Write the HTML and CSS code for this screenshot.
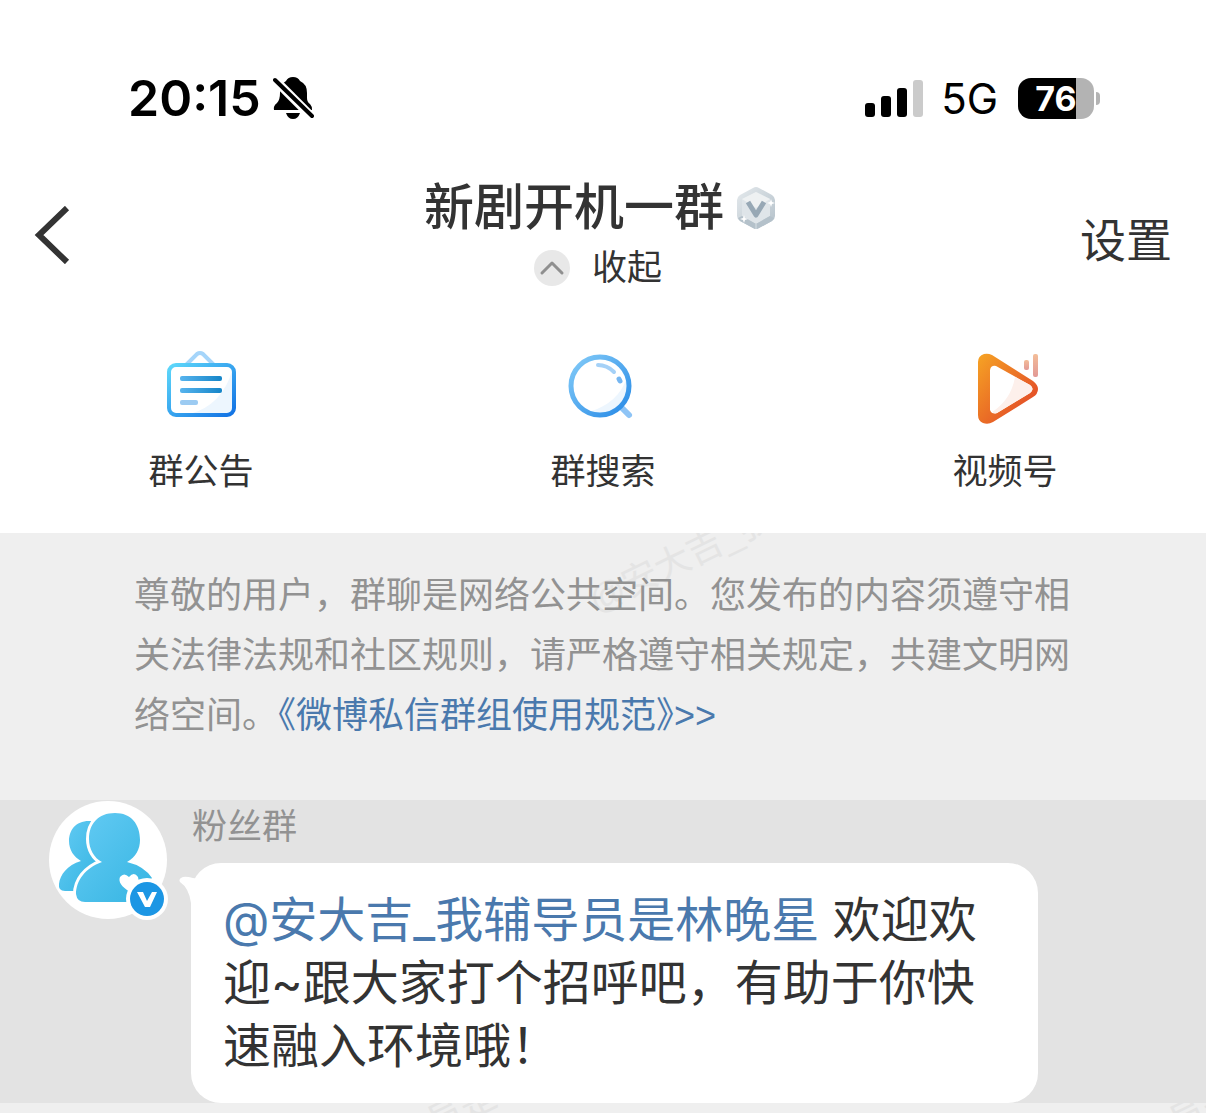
FILE: index.html
```html
<!DOCTYPE html>
<html lang="zh-CN">
<head>
    <title>新剧开机一群</title>
    <meta charset="UTF-8">
    <meta name="viewport" content="width=device-width, initial-scale=1">
    <link rel="stylesheet" href="styles.css">
</head>
<body>
    <header class="header">
        <div class="status">
            <span class="time">20:15</span>
            <svg class="bell" width="42" height="44" viewBox="0 0 42 44">
                <path d="M13 5Q15 1 20 1Q25 1 27 5Q34 8 34 17V22Q34 26 37 28Q39 30 39 34H1Q0 30 4 27Q7 24 7 17Q7 8 13 5Z"/>
                <path d="M13 37H27Q25 43 20 43Q15 43 13 37Z"/>
                <path d="M2 4L39 41" stroke="#fff" stroke-width="9"/>
                <path d="M2 4L39 40" stroke="#000" stroke-width="4" stroke-linecap="round"/>
            </svg>
            <svg class="signal" width="58" height="37" viewBox="0 0 58 37">
                <rect x="0" y="23" width="10" height="14" rx="3"/>
                <rect x="16" y="16" width="10" height="21" rx="3"/>
                <rect x="32" y="8" width="10" height="29" rx="3"/>
                <rect x="48" y="0" width="10" height="37" rx="3" fill="#cbcbcb"/>
            </svg>
            <span class="network">5G</span>
            <span class="battery"><b>76</b></span>
        </div>
        <nav class="nav">
            <button class="back" type="button" aria-label="返回">
                <svg width="36" height="58" viewBox="0 0 36 58"><path d="M33 2L5 29L33 56" fill="none" stroke="#333" stroke-width="6"/></svg>
            </button>
            <div class="heading">
                <h1>新剧开机一群
                    <svg width="40" height="44" viewBox="0 0 40 44">
                        <defs>
                            <linearGradient id="gem" x1="0" y1="0" x2="1" y2="1">
                                <stop offset="0" stop-color="#e5eaed"/>
                                <stop offset="1" stop-color="#b3c0c9"/>
                            </linearGradient>
                        </defs>
                        <path d="M17 2Q20 0 23 2L36 9Q39 11 39 14V30Q39 33 36 35L23 42Q20 44 17 42L4 35Q1 33 1 30V14Q1 11 4 9Z" fill="url(#gem)"/>
                        <path d="M20 6L34 13V30L20 38L6 30V13Z" fill="#dfe5e9"/>
                        <path d="M20 6L34 13L20 22L6 13Z" fill="#eef1f2"/>
                        <path d="M6 30L20 38L34 30L38 32L36 35L23 42Q20 44 17 42L4 35L2 32Z" fill="#b4c1ca"/>
                        <path d="M20 38V43" stroke="#d7e0e5"/>
                        <path d="M12 16L20 29L28 16" fill="none" stroke="#97a8b5" stroke-width="5" stroke-linejoin="round"/>
                        <path d="M35 13l1 3 3 1-3 1-1 3-1-3-3-1 3-1zM8 29l1 3 3 1-3 1-1 3-1-3-3-1 3-1z" fill="#fff"/>
                    </svg>
                </h1>
                <button class="fold" type="button">
                    <svg width="36" height="36" viewBox="0 0 36 36">
                        <circle cx="18" cy="18" r="18" fill="#e8e8e8"/>
                        <path d="M8 23L18 13L28 23" fill="none" stroke="#8f8f8f" stroke-width="3" stroke-linecap="round" stroke-linejoin="round"/>
                    </svg>
                    收起
                </button>
            </div>
            <button class="setting" type="button">设置</button>
        </nav>
        <div class="tabs">
            <button type="button">
                <svg width="90" height="90" viewBox="0 0 90 90">
                    <defs>
                        <linearGradient id="board" x1="0" y1="0" x2="1" y2="1">
                            <stop offset="0" stop-color="#5ed8fa"/>
                            <stop offset="1" stop-color="#1272e4"/>
                        </linearGradient>
                        <linearGradient id="line" gradientUnits="userSpaceOnUse" x1="24" y1="0" x2="66" y2="0">
                            <stop offset="0" stop-color="#57b4ee"/>
                            <stop offset="1" stop-color="#1585c8"/>
                        </linearGradient>
                    </defs>
                    <path d="M30 22L41 11Q44 9 47 11L58 22" fill="none" stroke="#a5d5fa" stroke-width="4"/>
                    <rect x="13" y="22" width="65" height="50" rx="7" fill="#fff"/>
                    <path d="M76 28V71H34Q66 62 76 28Z" fill="#edf6fe"/>
                    <rect x="13" y="22" width="65" height="50" rx="7" fill="none" stroke="url(#board)" stroke-width="4"/>
                    <rect x="24" y="33" width="42" height="5" rx="2" fill="url(#line)"/>
                    <rect x="24" y="45" width="42" height="5" rx="2" fill="url(#line)"/>
                    <rect x="24" y="57" width="18" height="5" rx="2" fill="#9ccbf2"/>
                </svg>
                群公告
            </button>
            <button type="button">
                <svg width="90" height="90" viewBox="0 0 90 90">
                    <defs>
                        <linearGradient id="glass" x1="0" y1="0" x2="1" y2="1">
                            <stop offset="0" stop-color="#83cbf8"/>
                            <stop offset="1" stop-color="#278ae6"/>
                        </linearGradient>
                    </defs>
                    <path d="M65 66L71 72" stroke="#8ec4f6" stroke-width="6" stroke-linecap="round"/>
                    <circle cx="42" cy="43" r="29" fill="#fff"/>
                    <path d="M69 34Q61 60 31 69Q49 76 63 61Q72 50 69 34Z" fill="#edf6fe"/>
                    <circle cx="42" cy="43" r="29" fill="none" stroke="url(#glass)" stroke-width="5"/>
                    <path d="M40 22Q49 22 56 29" fill="none" stroke="#a5d1f7" stroke-width="4" stroke-linecap="round"/>
                    <path d="M61 36L62 38" stroke="#75b6f1" stroke-width="5" stroke-linecap="round"/>
                </svg>
                群搜索
            </button>
            <button type="button">
                <svg width="90" height="90" viewBox="0 0 90 90">
                    <defs>
                        <linearGradient id="play" x1="0" y1="0" x2="1" y2="1">
                            <stop offset="0" stop-color="#f6a424"/>
                            <stop offset="1" stop-color="#df3b28"/>
                        </linearGradient>
                        <linearGradient id="bar" x1="0" y1="0" x2="0" y2="1">
                            <stop offset="0" stop-color="#f3bd98"/>
                            <stop offset="1" stop-color="#e29996"/>
                        </linearGradient>
                    </defs>
                    <path d="M18 19Q18 13 24 11Q28 10 32 12L73 38Q78 42 78 46Q78 51 73 54L33 79Q28 82 23 80Q18 78 18 72Z" fill="url(#play)"/>
                    <path d="M30 27Q31 22 36 23L70 42Q75 46 70 50L37 70Q32 72 30 67Z" fill="#fff"/>
                    <path d="M55 34L70 42Q75 46 70 50L37 70Q34 71 32 69Q51 57 55 34Z" fill="#fdf0eb"/>
                    <rect x="64" y="17" width="5" height="10" rx="2" fill="url(#bar)"/>
                    <rect x="73" y="11" width="5" height="23" rx="2" fill="url(#bar)"/>
                </svg>
                视频号
            </button>
        </div>
    </header>
    <main class="chat">
        <section class="notice">
            <span class="mark mark_top" aria-hidden="true">@安大吉_我</span>
            <p>尊敬的用户，群聊是网络公共空间。您发布的内容须遵守相关法律法规和社区规则，请严格遵守相关规定，共建文明网络空间。<a href="#">《微博私信群组使用规范》&gt;&gt;</a></p>
        </section>
        <section class="message">
            <div class="avatar">
                <svg width="120" height="120" viewBox="0 0 120 120">
                    <defs>
                        <linearGradient id="people" x1="0" y1="0" x2="1" y2="1">
                            <stop offset="0" stop-color="#64cbf4"/>
                            <stop offset="1" stop-color="#36b5e2"/>
                        </linearGradient>
                    </defs>
                    <circle cx="60" cy="60" r="59" fill="#fff"/>
                    <path d="M43 21C28 20 21 30 21 41C21 50 26 57 33 61C19 65 12 75 11 84Q10 91 17 91H26L50 62Z" fill="url(#people)"/>
                    <path d="M67 13C50 13 41 24 41 39C41 49 46 58 54 62C37 68 28 81 28 94Q29 102 37 102H88L104 78Q96 66 79 62C88 57 92 49 92 40C92 24 83 13 67 13Z" fill="url(#people)" stroke="#fff" stroke-width="6" paint-order="stroke"/>
                    <path d="M82 92Q69 84 72 77Q76 72 81 77Q86 71 90 77Q93 83 82 92Z" fill="#fff"/>
                    <circle cx="99" cy="99" r="21" fill="#fff"/>
                    <circle cx="99" cy="99" r="17" fill="#1c96e4"/>
                    <path d="M89 92H95L99 101L104 92H109L102 107H97Z" fill="#fff"/>
                </svg>
            </div>
            <div class="content">
                <div class="name">粉丝群</div>
                <div class="bubble">
                    <svg class="tail" width="30" height="40" viewBox="0 0 30 40"><path d="M30 6Q22 17 14 15Q7 13 4 14Q-1 16 1 19Q10 25 12 40H30Z" fill="#fff"/></svg>
                    <a href="#">@安大吉_我辅导员是林晚星</a> 欢迎欢迎~跟大家打个招呼吧，有助于你快速融入环境哦！
                </div>
            </div>
        </section>
        <div class="rest">
            <span class="mark mark_left" aria-hidden="true">员是</span>
            <span class="mark mark_right" aria-hidden="true">员是</span>
        </div>
    </main>
</body>
</html>
```
FILE: styles.css
```css
*{
    box-sizing: border-box;
}
body{
    margin: 0;
    min-height: 100vh;
    display: flex;
    flex-direction: column;
    background: #efefef;
    color: #333;
    font-family: "Liberation Sans","Noto Sans CJK SC",sans-serif;
}
button{
    border: 0;
    padding: 0;
    background: none;
    color: inherit;
    font-family: inherit;
    cursor: pointer;
}
svg{
    display: block;
    flex: none;
}
a{
    color: #4a79ad;
    text-decoration: none;
}
.header{
    padding-top: 70px;
    background: #fff;
}
.status{
    display: flex;
    align-items: center;
    height: 56px;
    padding: 0 112px 0 128px;
    color: #000;
    font-family: Inter,sans-serif;
}
.time{
    font-size: 50px;
    font-weight: 600;
}
.bell{
    margin-left: 12px;
}
.signal{
    margin-left: auto;
}
.network{
    margin: 0 20px 0 18px;
    font-size: 42px;
}
.battery{
    position: relative;
    width: 76px;
    height: 41px;
    border-radius: 13px;
    background: linear-gradient(to right,#000 76%,#b3b3b3 76%);
    color: #fff;
    font-size: 34px;
    line-height: 41px;
    text-align: center;
}
.battery::after{
    content: "";
    position: absolute;
    left: 78px;
    top: 14px;
    width: 4px;
    height: 13px;
    border-radius: 0 4px 4px 0;
    background: #b3b3b3;
}
.nav{
    display: grid;
    grid-template-columns: 1fr auto 1fr;
    align-items: center;
    padding: 52px 34px 0;
}
.back{
    justify-self: start;
    padding-top: 6px;
}
.heading{
    display: flex;
    flex-direction: column;
    align-items: center;
    gap: 12px;
    margin-right: 6px;
}
.heading h1{
    display: flex;
    align-items: center;
    gap: 12px;
    margin: 0;
    font-size: 50px;
    font-weight: 500;
    line-height: 60px;
}
.fold{
    display: flex;
    align-items: center;
    gap: 22px;
    padding-right: 4px;
    font-size: 35px;
    line-height: 36px;
}
.setting{
    justify-self: end;
    padding-top: 18px;
    font-size: 46px;
    line-height: 56px;
}
.tabs{
    display: grid;
    grid-template-columns: repeat(3,1fr);
    padding: 57px 0 39px;
}
.tabs button{
    display: flex;
    flex-direction: column;
    align-items: center;
    gap: 17px;
    font-size: 35px;
    line-height: 44px;
}
.chat{
    flex: 1;
    display: flex;
    flex-direction: column;
}
.notice{
    position: relative;
    overflow: hidden;
    padding: 33px 134px 54px;
    color: #929292;
    font-size: 36px;
    line-height: 60px;
}
.notice p{
    position: relative;
    margin: 0;
}
.notice a{
    font-feature-settings: "halt";
}
.mark{
    position: absolute;
    color: #e4e4e4;
    font-size: 36px;
    line-height: 40px;
    white-space: nowrap;
    transform: rotate(-26deg);
    transform-origin: left bottom;
}
.mark_top{
    left: 600px;
    top: 48px;
}
.message{
    display: flex;
    gap: 23px;
    padding: 0 168px 0 48px;
    background: #e3e3e3;
}
.content{
    flex: 1;
}
.name{
    padding-left: 1px;
    color: #929292;
    font-size: 35px;
    line-height: 54px;
}
.bubble{
    position: relative;
    margin-top: 9px;
    padding: 25px 32px 26px;
    border-radius: 30px;
    background: #fff;
    font-family: Inter,"Noto Sans CJK SC",sans-serif;
    font-size: 48px;
    line-height: 63px;
}
.tail{
    position: absolute;
    left: -12px;
    top: 0;
}
.rest{
    position: relative;
    flex: 1;
    min-height: 10px;
    overflow: hidden;
}
.mark_left{
    left: 438px;
    top: 0;
}
.mark_right{
    left: 1180px;
    top: 0;
}
```
